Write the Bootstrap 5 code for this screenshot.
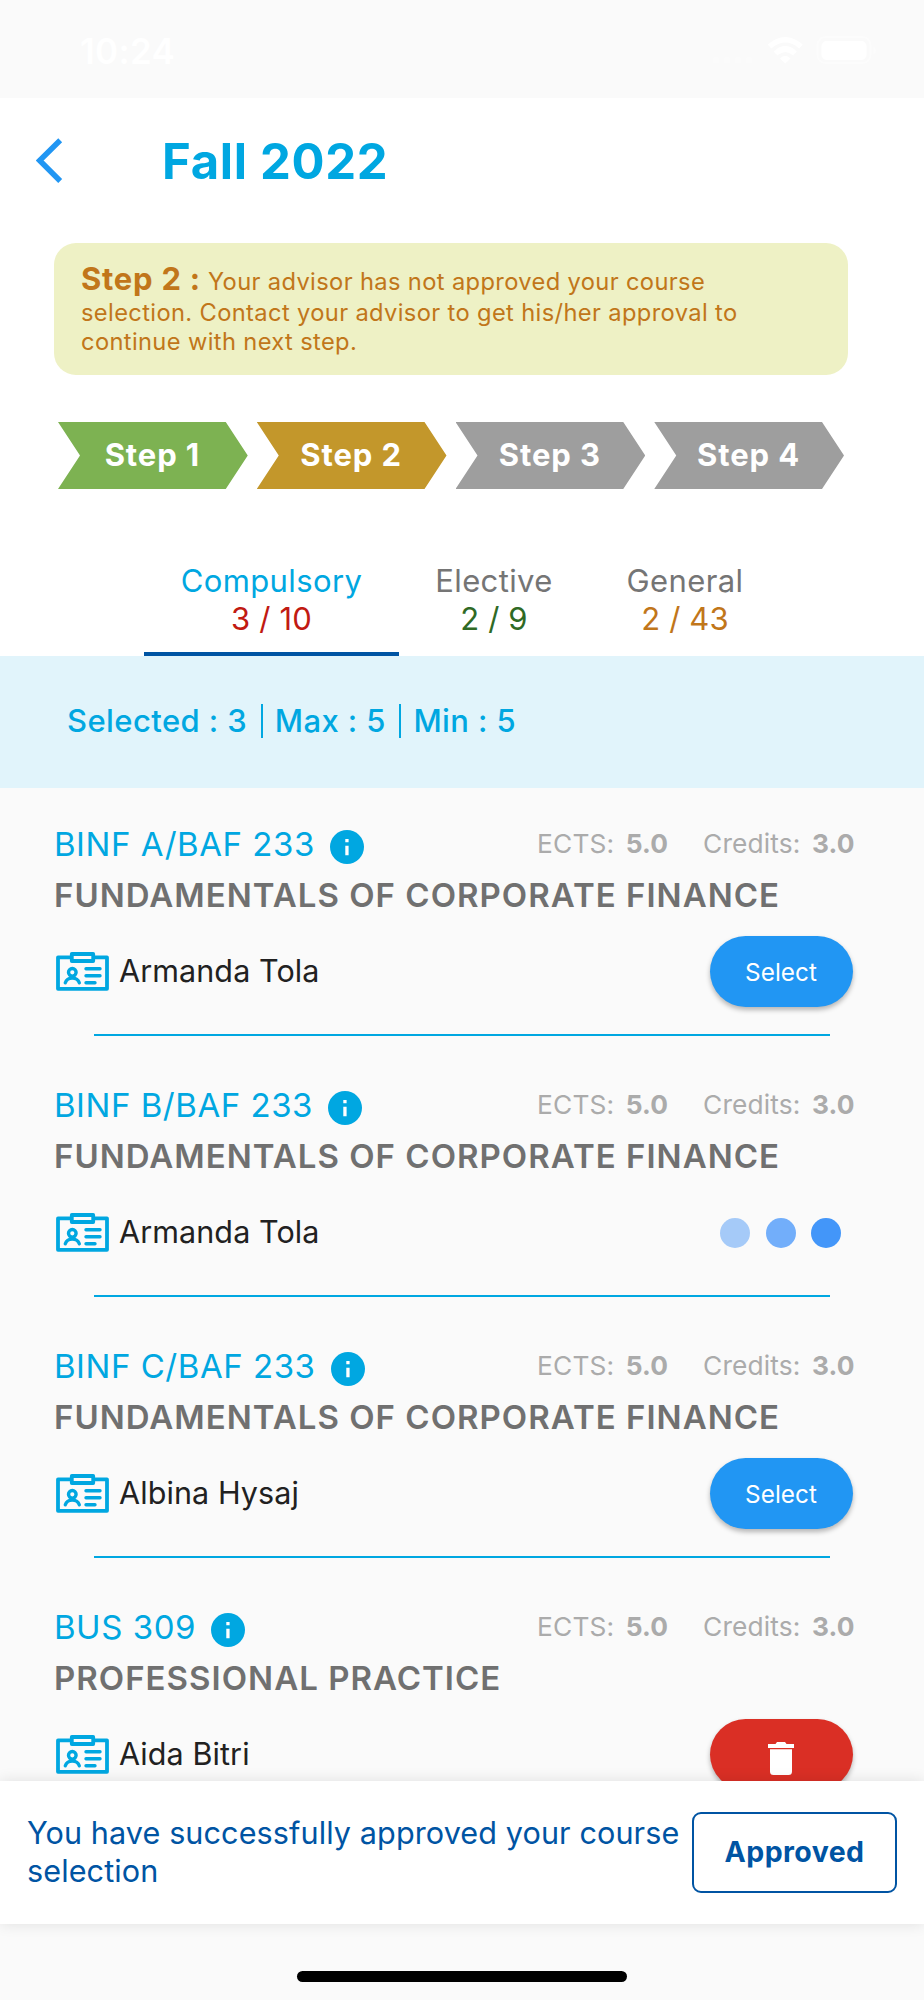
<!DOCTYPE html>
<html lang="en">
<head>
<meta charset="utf-8">
<meta name="viewport" content="width=device-width, initial-scale=1">
<title>Fall 2022</title>
<link href="https://cdn.jsdelivr.net/npm/bootstrap@5.3.0/dist/css/bootstrap.min.css" rel="stylesheet">
<style>
:root{--cyan:#00a7e1;--navy:#0054a3;--blue:#2196f3;--amber:#c1761a}
body{font-family:"Inter","Liberation Sans",sans-serif;background:#fafafa;color:#212121}
.app{height:2000px;width:924px}
.status{height:98px;padding:0 47px 0 80px;color:#fff}
.status .clock{font-size:35px;font-weight:600;letter-spacing:.3px;line-height:102px}
.top-bar{height:127px;padding-left:36px}
.top-bar h1{font-size:49px;font-weight:700;letter-spacing:.68px;line-height:60px;color:var(--cyan);margin:0 0 0 98px}
.top-bar svg{margin-bottom:2px}
.notice{margin:18.4px 76px 0 54px;height:131.6px;border:0;border-radius:22px;background:#eef1c5;color:var(--amber);padding:16.6px 27px 0;font-size:23.7px;letter-spacing:.36px;line-height:29.4px}
.notice strong{font-size:31px;letter-spacing:.75px;line-height:38px}
.steps{margin:47px 80px 0 58px;gap:9px}
.step-arrow{flex:1 1 0;height:67px;line-height:66px;text-align:center;color:#fff;font-weight:700;font-size:31px;letter-spacing:.9px;padding-right:1px;background:#9e9e9e;clip-path:polygon(0 0,calc(100% - 22px) 0,100% 50%,calc(100% - 22px) 100%,0 100%,22px 50%)}
.step-arrow.done{background:#7db252}
.step-arrow.active{background:#c3972b}
.course-tabs{height:167px;padding:73px 0 0 144px}
.course-tabs .nav-link{height:94px;padding:0;font-size:31px;letter-spacing:.38px;line-height:38px;color:#757575;text-align:center;border-radius:0;border-bottom:4px solid transparent}
.course-tabs .nav-link.active{color:var(--cyan);border-color:var(--navy)}
.course-tabs .count{display:block;letter-spacing:.15px;line-height:38px}
.summary{height:132px;background:#e1f4fb;color:var(--cyan);font-size:31px;font-weight:500;letter-spacing:.42px;line-height:38px;padding:0 0 2px 67px}
.summary .rule{width:2px;height:34px;margin:0 12px 0 13.5px;background:var(--cyan)}
.courses{padding:36px 69.5px 0 54px;min-height:0}
.course{height:261px;flex:none}
.course .head{height:40px}
.course .code{font-size:33px;letter-spacing:.53px;line-height:40.5px;color:var(--cyan)}
.course .info{margin:6px 0 0 15px}
.course .meta{font-size:26.3px;line-height:40.5px;color:#ababab;letter-spacing:.15px}
.course .meta b{font-weight:700;letter-spacing:.1px;margin-left:11.5px}
.course .credits{margin-left:35px}
.course h2{font-size:33px;font-weight:600;letter-spacing:1.01px;line-height:40px;color:#707070;margin:11px 0 21px}
.course .person{height:71.5px;font-size:30.5px;letter-spacing:.1px;padding-right:2px}
.course .person>span{padding-bottom:1px}
.course .line{height:2.5px;margin:26.5px 24.5px 0 40px;background:var(--cyan)}
.btn.pill{width:143px;height:71.5px;border-radius:36px;border:0;padding:0;background:var(--blue);color:#fff;font-size:24.3px;letter-spacing:.05px;box-shadow:0 3px 5px rgba(0,0,0,.28)}
.btn.pill.remove{background:#da2f25}
.dots{padding-right:11.5px}
.dots i{display:block;width:30px;height:30px;border-radius:50%;background:#4396f9}
.result{height:143px;padding:0 27px 0 27px;background:#fff;color:var(--navy);box-shadow:0 0 14px rgba(0,0,0,.11);z-index:2}
.result p{font-size:30.6px;letter-spacing:.09px;line-height:38px;width:660px;margin:0;padding-bottom:2px}
.result .btn{width:205px;height:80.5px;border:2.3px solid var(--navy);border-radius:9px;padding:0 0 1px;color:var(--navy);font-size:28.5px;font-weight:700;letter-spacing:.4px}
.home{height:76px;padding-top:47px}
.home span{display:block;width:330px;height:11px;border-radius:6px;background:#000}
svg{display:block;flex:none}
</style>
</head>
<body>
<svg width="0" height="0" class="d-none">
  <symbol id="info" viewBox="0 0 34 34"><circle cx="17" cy="17" r="17" fill="#00a7e1"/><path d="M15.3 9h3.3v3.3h-3.3zM15.3 15.7h3.3v9.5h-3.3z" fill="#fff"/></symbol>
  <symbol id="badge" viewBox="0 0 53 39"><g fill="none" stroke="#00a7e1" stroke-width="3.4" stroke-linecap="round" stroke-linejoin="round"><path d="M14.8 5.4H2V36.8H51V5.4H38.2" stroke-width="3.8"/><path d="M15.8 2H37.2V9H15.8z" stroke-width="3.8"/><circle cx="16.3" cy="20.3" r="3.8"/><path d="M9.3 30.8C11.3 24.6 21.2 24.6 23.3 30.8M30 16.8h14M30 23.8h14M30 30.8h9"/></g></symbol>
</svg>
<div class="app d-flex flex-column overflow-hidden">
  <div class="status d-flex justify-content-between flex-shrink-0">
    <span class="clock">10:24</span>
    <svg width="168" height="98" viewBox="0 0 168 98" fill="#fff"><g opacity=".3"><circle cx="7" cy="60" r="3.5"/><circle cx="18" cy="60" r="3.5"/><circle cx="29" cy="60" r="3.5"/><circle cx="40" cy="60" r="3.5"/></g><path d="M71 58.5Q76.200 53 81.500 58.500L76.200 63.500z"/><path d="M66.5 53.5Q76.2 44.5 86 53.5M60.5 46.5Q76.2 33 92 46.5" fill="none" stroke="#fff" stroke-width="5.5"/><rect x="108.5" y="37" width="53" height="26" rx="8" fill="none" stroke="#fff" stroke-opacity=".4" stroke-width="2"/><rect x="112.5" y="41" width="45" height="19" rx="5"/><path d="M164.5 46v9q5-4.5 0-9z" opacity=".4"/></svg>
  </div>
  <header class="bg-white flex-shrink-0">
    <div class="top-bar d-flex align-items-center">
      <svg width="28" height="46" viewBox="0 0 28 46"><path d="M24.2 2.2L3.7 22.5L24.2 43" fill="none" stroke="#2196f3" stroke-width="5.5"/></svg>
      <h1>Fall 2022</h1>
    </div>
    <div class="notice alert mb-0"><strong>Step 2 :</strong> Your advisor has not approved your course<br>selection. Contact your advisor to get his/her approval to<br>continue with next step.</div>
    <div class="steps d-flex">
      <div class="step-arrow done">Step 1</div>
      <div class="step-arrow active">Step 2</div>
      <div class="step-arrow">Step 3</div>
      <div class="step-arrow">Step 4</div>
    </div>
    <nav class="course-tabs nav flex-nowrap">
      <a class="nav-link active" style="width:255px">Compulsory<span class="count" style="color:#c11a12">3 / 10</span></a>
      <a class="nav-link" style="width:190px">Elective<span class="count" style="color:#2f6a25">2 / 9</span></a>
      <a class="nav-link" style="width:192px">General<span class="count" style="color:#c1761a">2 / 43</span></a>
    </nav>
  </header>
  <div class="summary d-flex align-items-center flex-shrink-0">
    <span>Selected : 3</span><span class="rule"></span><span>Max : 5</span><span class="rule"></span><span>Min : 5</span>
  </div>
  <main class="courses d-flex flex-column flex-grow-1 overflow-hidden">
    <article class="course">
      <div class="head d-flex"><span class="code">BINF A/BAF 233</span><svg class="info" width="34" height="34"><use href="#info"/></svg>
        <div class="meta d-flex ms-auto"><span>ECTS:</span><b>5.0</b><span class="credits">Credits:</span><b>3.0</b></div></div>
      <h2>FUNDAMENTALS OF CORPORATE FINANCE</h2>
      <div class="person d-flex align-items-center"><svg class="me-2" width="57" height="39" viewBox="-2 0 57 39"><use href="#badge" width="53" height="39"/></svg><span>Armanda Tola</span><button class="btn pill ms-auto">Select</button></div>
      <div class="line"></div>
    </article>
    <article class="course">
      <div class="head d-flex"><span class="code">BINF B/BAF 233</span><svg class="info" width="34" height="34"><use href="#info"/></svg>
        <div class="meta d-flex ms-auto"><span>ECTS:</span><b>5.0</b><span class="credits">Credits:</span><b>3.0</b></div></div>
      <h2>FUNDAMENTALS OF CORPORATE FINANCE</h2>
      <div class="person d-flex align-items-center"><svg class="me-2" width="57" height="39" viewBox="-2 0 57 39"><use href="#badge" width="53" height="39"/></svg><span>Armanda Tola</span>
        <div class="dots d-flex ms-auto"><i style="background:#a5caf8"></i><i style="background:#72aefa;margin:0 15px 0 16px"></i><i></i></div></div>
      <div class="line"></div>
    </article>
    <article class="course">
      <div class="head d-flex"><span class="code">BINF C/BAF 233</span><svg class="info" width="34" height="34"><use href="#info"/></svg>
        <div class="meta d-flex ms-auto"><span>ECTS:</span><b>5.0</b><span class="credits">Credits:</span><b>3.0</b></div></div>
      <h2>FUNDAMENTALS OF CORPORATE FINANCE</h2>
      <div class="person d-flex align-items-center"><svg class="me-2" width="57" height="39" viewBox="-2 0 57 39"><use href="#badge" width="53" height="39"/></svg><span>Albina Hysaj</span><button class="btn pill ms-auto">Select</button></div>
      <div class="line"></div>
    </article>
    <article class="course">
      <div class="head d-flex"><span class="code">BUS 309</span><svg class="info" width="34" height="34"><use href="#info"/></svg>
        <div class="meta d-flex ms-auto"><span>ECTS:</span><b>5.0</b><span class="credits">Credits:</span><b>3.0</b></div></div>
      <h2>PROFESSIONAL PRACTICE</h2>
      <div class="person d-flex align-items-center"><svg class="me-2" width="57" height="39" viewBox="-2 0 57 39"><use href="#badge" width="53" height="39"/></svg><span>Aida Bitri</span>
        <button class="btn pill remove ms-auto d-flex justify-content-center align-items-center pt-2" aria-label="Remove"><svg width="26" height="33" viewBox="0 0 26 33" fill="#fff"><path d="M0 2h7.5l1.500-2h8l1.500 2H26v4H0zM2 7.3H24V29.500a3.500 3.500 0 0 1-3.500 3.500h-15A3.500 3.500 0 0 1 2 29.500z"/></svg></button></div>
    </article>
  </main>
  <div class="result d-flex align-items-center justify-content-between flex-shrink-0 position-relative">
    <p>You have successfully approved your course selection</p>
    <button class="btn">Approved</button>
  </div>
  <div class="home d-flex justify-content-center align-items-start flex-shrink-0"><span></span></div>
</div>
<script src="https://cdn.jsdelivr.net/npm/bootstrap@5.3.0/dist/js/bootstrap.bundle.min.js"></script>
</body>
</html>
